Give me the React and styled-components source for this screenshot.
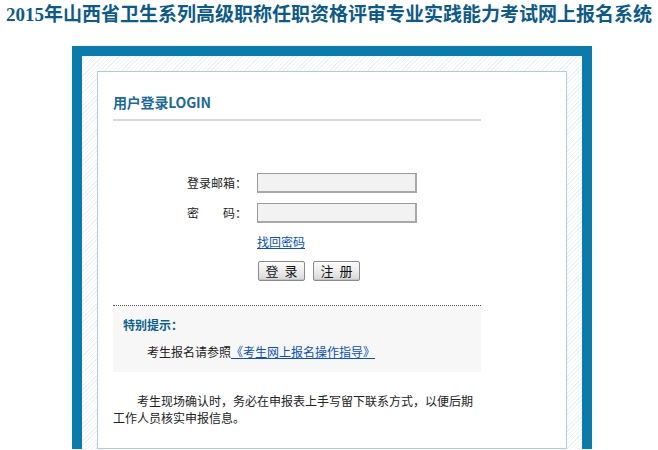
import React from 'react'
import styled, { createGlobalStyle } from 'styled-components'

const Global = createGlobalStyle`
    body{
        margin: 0;
        background: #fff;
        font-family: 'Noto Sans CJK SC', 'Noto Sans', sans-serif;
        font-size: 12px;
        color: #222;
    }
`

const Title = styled.h1`
    margin: 0;
    padding-top: 4px;
    height: 46px;
    box-sizing: border-box;
    text-align: center;
    white-space: nowrap;
    font-family: 'Liberation Serif', 'Noto Sans CJK SC', serif;
    font-size: 19px;
    line-height: 22px;
    font-weight: 700;
    color: #0b5a8c;
`

const Frame = styled.div`
    width: 520px;
    box-sizing: border-box;
    margin-left: 72px;
    border: 10px solid #0a7bad;
    border-bottom: none;
    padding: 15px 15px 0 15px;
    background: repeating-linear-gradient(135deg, #ffffff 0px, #ffffff 2px, #ecf3fa 2px, #ecf3fa 3px);
`

const Panel = styled.div`
    background: #fff;
    border: 1px solid #aecbd9;
    padding: 20px 15px 22px 15px;
    width: 470px;
    box-sizing: border-box;
`

const PanelHead = styled.div`
    width: 368px;
    font-size: 14px;
    line-height: 20px;
    font-weight: 700;
    color: #1a6a9a;
    padding-bottom: 7px;
    border-bottom: 2px solid #d8d8d8;
    font-family: 'Noto Sans CJK SC', 'Liberation Sans', sans-serif;
    letter-spacing: -0.2px;
`

const Form = styled.div`
    margin: 52px 0 0 74px;
    display: grid;
    grid-template-columns: 60px 160px;
    column-gap: 10px;
    row-gap: 10px;
    align-items: center;
`

const Label = styled.label`
    white-space: pre;
    line-height: 20px;
`

const Input = styled.input`
    height: 20px;
    width: 160px;
    box-sizing: border-box;
    border-style: solid;
    border-width: 1px 2px 2px 1px;
    border-color: #9a9a9a #a8a8a8 #a8a8a8 #9a9a9a;
    background: #f2f2f2;
    padding: 0 3px;
    outline: none;
`

const LinkRow = styled.div`
    grid-column: 2;
    margin-top: 1px;
    line-height: 16px;
`

const BlueLink = styled.a`
    color: #0a4fc4;
    text-decoration: underline;
    cursor: pointer;
`

const Buttons = styled.div`
    grid-column: 2;
    display: flex;
    gap: 8px;
    margin-top: 1px;
    padding-left: 1px;
`

const Btn = styled.button`
    width: 47px;
    height: 20px;
    padding: 0;
    border: 1px solid #8a8a8a;
    border-radius: 2px;
    background: linear-gradient(#fbfbfb, #e9e9e9 60%, #d6d6d6);
    font-family: 'Noto Sans CJK SC', sans-serif;
    font-size: 13px;
    line-height: 16px;
    color: #111;
    letter-spacing: 6px;
    text-indent: 6px;
    box-shadow: inset 0 -1px 0 #c4c4c4;
`

const Notice = styled.div`
    margin-top: 24px;
    width: 368px;
    border-top: 1px dotted #555;
    background: #f7f7f7;
    padding: 11px 10px 12px 10px;
    box-sizing: border-box;
`

const NoticeHead = styled.div`
    font-weight: 700;
    color: #0b5f8f;
    line-height: 16px;
`

const NoticeText = styled.div`
    margin-top: 11px;
    text-indent: 24px;
    line-height: 16px;
`

const Para = styled.p`
    margin: 20px 0 0 0;
    width: 368px;
    text-indent: 24px;
    line-height: 17px;
`

export default function App() {
    return (
        <>
            <Global />
            <Title>2015年山西省卫生系列高级职称任职资格评审专业实践能力考试网上报名系统</Title>
            <Frame>
                <Panel>
                    <PanelHead>用户登录LOGIN</PanelHead>
                    <Form>
                        <Label>登录邮箱：</Label>
                        <Input type="text" />
                        <Label>{'密　　码：'}</Label>
                        <Input type="password" />
                        <LinkRow><BlueLink>找回密码</BlueLink></LinkRow>
                        <Buttons>
                            <Btn>登录</Btn>
                            <Btn>注册</Btn>
                        </Buttons>
                    </Form>
                    <Notice>
                        <NoticeHead>特别提示：</NoticeHead>
                        <NoticeText>考生报名请参照<BlueLink>《考生网上报名操作指导》</BlueLink></NoticeText>
                    </Notice>
                    <Para>考生现场确认时，务必在申报表上手写留下联系方式，以便后期工作人员核实申报信息。</Para>
                </Panel>
            </Frame>
        </>
    )
}
